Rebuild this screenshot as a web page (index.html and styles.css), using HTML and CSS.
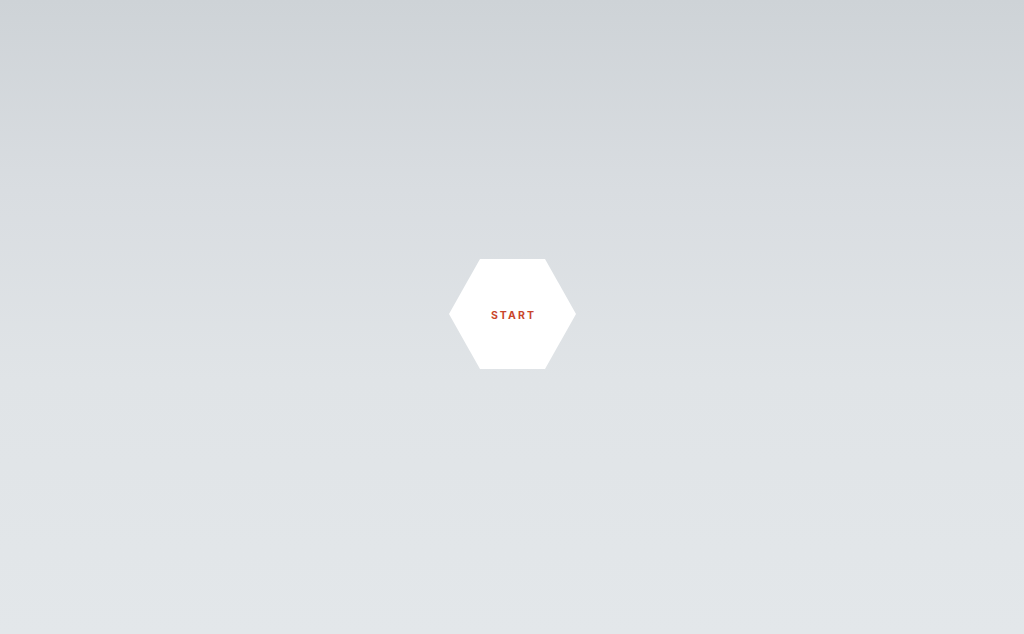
FILE: index.html
```html
<!DOCTYPE html>
<html>
<head>
<meta charset="utf-8">
<link rel="stylesheet" href="styles.css">
</head>
<body>
<main class="stage">
  <button class="hex">START</button>
</main>
</body>
</html>
```
FILE: styles.css
```css
html, body {
  margin: 0;
  padding: 0;
  height: 100%;
}
body {
  background: linear-gradient(to bottom, #ced3d7 0%, #d9dde1 30%, #e0e4e7 60%, #e3e7ea 100%);
  font-family: "Open Sans", "Liberation Sans", sans-serif;
}
.stage {
  height: 100%;
  display: flex;
  align-items: center;
  justify-content: center;
  padding-left: 1px;
  box-sizing: border-box;
}
.hex {
  width: 127px;
  height: 110px;
  margin-top: -6px;
  border: 0;
  background: #ffffff;
  clip-path: polygon(24.4% 0, 75.6% 0, 100% 50%, 75.6% 100%, 24.4% 100%, 0 50%);
  color: #c9452c;
  font-family: Inter, "Open Sans", "Liberation Sans", sans-serif;
  font-weight: 700;
  font-size: 10.5px;
  letter-spacing: 2.1px;
  padding: 2px 0 0 2px;
  cursor: pointer;
}
```
